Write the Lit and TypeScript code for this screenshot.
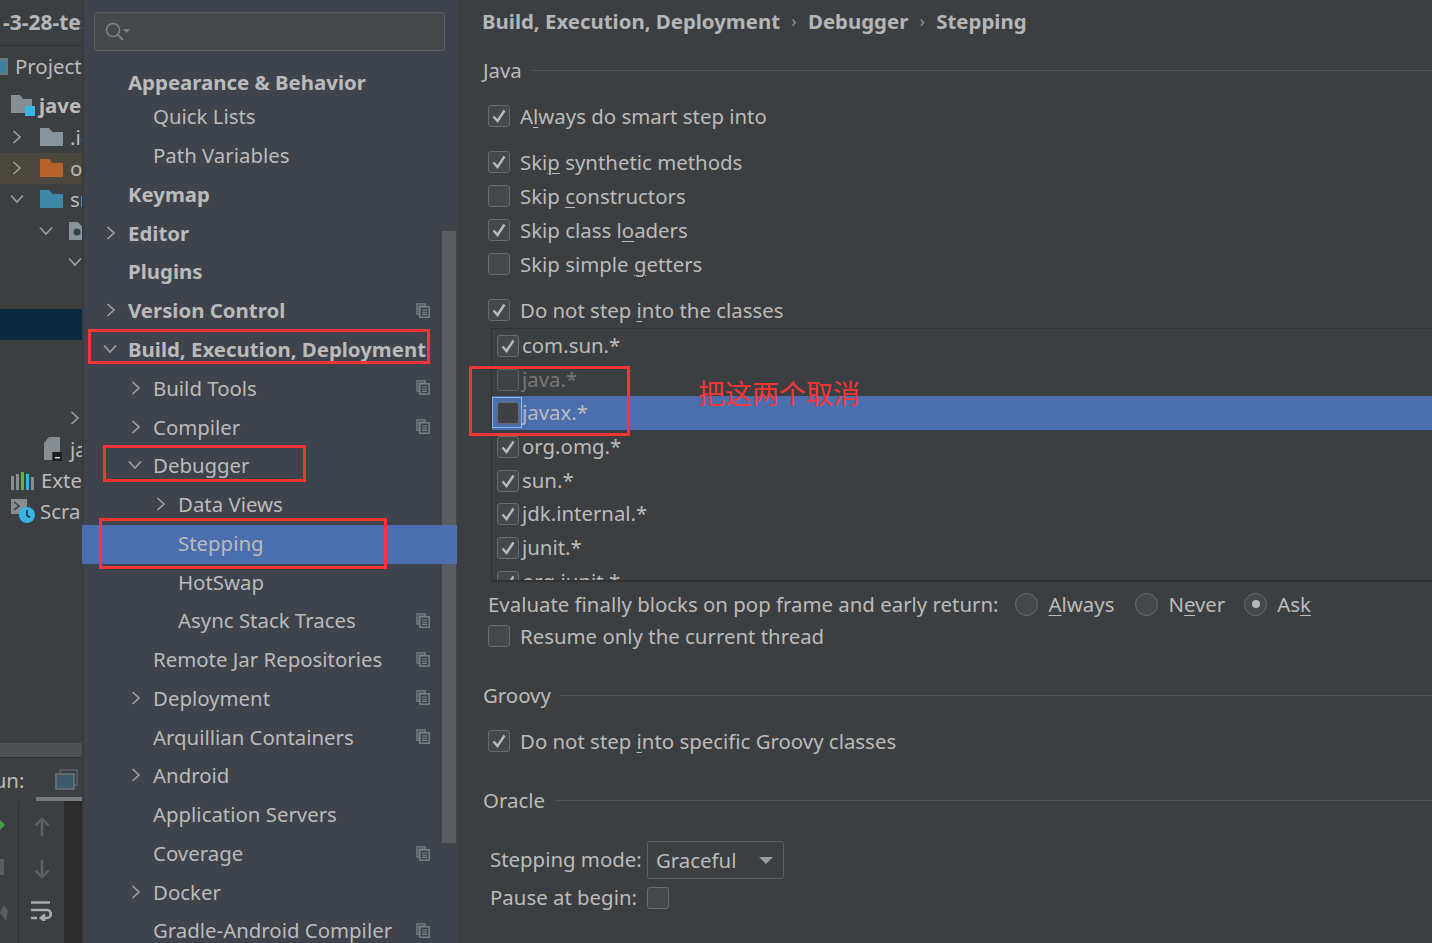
import { LitElement, html, css } from "lit";
import { customElement } from "lit/decorators.js";
import { styleMap } from "lit/directives/style-map.js";

const chevR = html`<svg class="chev" viewBox="0 0 12 16" width="12" height="16"><path d="M2.500 2 L9 8 L2.500 14" fill="none" stroke="#9da0a2" stroke-width="1.700"/></svg>`;
const chevD = html`<svg class="chev" viewBox="0 0 14 12" width="14" height="12"><path d="M1 2.500 L7 9 L13 2.500" fill="none" stroke="#9da0a2" stroke-width="1.700"/></svg>`;
const copyIcon = html`<svg class="copy" viewBox="0 0 14 15" width="14" height="15"><path d="M1 .8h8v2.400H3.200v8H1z" fill="none" stroke="#7c8389" stroke-width="1.300"/><rect x="3.800" y="3.800" width="9.400" height="10.400" fill="none" stroke="#7c8389" stroke-width="1.400"/><path d="M6 7h5M6 9.200h5M6 11.400h5" stroke="#7c8389" stroke-width="1.100"/></svg>`;
const folder = (c: string) => html`<svg viewBox="0 0 23 18" width="23" height="18"><path d="M0 0h9l3.500 4H23v14H0z" fill="${c}"/></svg>`;

type Item = { t: string; lvl: number; bold?: boolean; arrow?: "r" | "d"; copy?: boolean; sel?: boolean };
const items: Item[] = [
  { t: "Appearance & Behavior", lvl: 0, bold: true },
  { t: "Quick Lists", lvl: 1 },
  { t: "Path Variables", lvl: 1 },
  { t: "Keymap", lvl: 0, bold: true },
  { t: "Editor", lvl: 0, bold: true, arrow: "r" },
  { t: "Plugins", lvl: 0, bold: true },
  { t: "Version Control", lvl: 0, bold: true, arrow: "r", copy: true },
  { t: "Build, Execution, Deployment", lvl: 0, bold: true, arrow: "d" },
  { t: "Build Tools", lvl: 1, arrow: "r", copy: true },
  { t: "Compiler", lvl: 1, arrow: "r", copy: true },
  { t: "Debugger", lvl: 1, arrow: "d" },
  { t: "Data Views", lvl: 2, arrow: "r" },
  { t: "Stepping", lvl: 2, sel: true },
  { t: "HotSwap", lvl: 2 },
  { t: "Async Stack Traces", lvl: 2, copy: true },
  { t: "Remote Jar Repositories", lvl: 1, copy: true },
  { t: "Deployment", lvl: 1, arrow: "r", copy: true },
  { t: "Arquillian Containers", lvl: 1, copy: true },
  { t: "Android", lvl: 1, arrow: "r" },
  { t: "Application Servers", lvl: 1 },
  { t: "Coverage", lvl: 1, copy: true },
  { t: "Docker", lvl: 1, arrow: "r" },
  { t: "Gradle-Android Compiler", lvl: 1, copy: true },
];

const listItems: { t: string; on: boolean; dim?: boolean; sel?: boolean }[] = [
  { t: "com.sun.*", on: true },
  { t: "java.*", on: false, dim: true },
  { t: "javax.*", on: false, sel: true },
  { t: "org.omg.*", on: true },
  { t: "sun.*", on: true },
  { t: "jdk.internal.*", on: true },
  { t: "junit.*", on: true },
  { t: "org.junit.*", on: true },
];

const box = (on: boolean) => html`<span class="cb">${on
  ? html`<svg viewBox="0 0 20 20" width="20" height="20"><path d="M4.500 10.500 L8.500 15 L15.500 4.500" fill="none" stroke="#b9bbbd" stroke-width="2.400"/></svg>`
  : ""}</span>`;

@customElement("app-root")
export class AppRoot extends LitElement {
  static styles = css`
    :host { display: flex; width: 1432px; height: 943px; overflow: hidden; position: relative;
      background: #3c3f41; color: #bbbbbb; font-family: "Noto Sans", "Open Sans", sans-serif; font-size: 20.4px; }
    * { box-sizing: border-box; }
    u { text-underline-offset: 3px; text-decoration-thickness: 1px; }

    .left { width: 82px; height: 943px; flex: none; overflow: hidden; display: flex; flex-direction: column; background: #3c3f41; white-space: nowrap; }
    .lhead { height: 46px; flex: none; border-bottom: 1px solid #323232; font-weight: 700; line-height: 44px; padding-left: 3px; font-size: 21px; color: #b4b6b8; overflow: hidden; }
    .lproj { height: 40px; margin-bottom: 4px; flex: none; display: flex; align-items: center; gap: 7px; }
    .lproj i { display: block; width: 8px; height: 17px; border: 2px solid #6e7478; border-left: none; background: #3f7f9f; flex: none; }
    .lrow { height: 31.25px; flex: none; display: flex; align-items: center; position: relative; }
    .lrow svg { flex: none; }
    .ic { display: flex; }
    .ic-j { margin-left: 11px; }
    .ic-f { margin: 0 7px 0 17px; }
    .ic-d { margin: 0 7px 0 16px; }
    .ic-p { margin-left: 16px; }
    .ic-a { margin: 0 8px 0 44px; }
    .ic-e { margin: 0 7px 0 11px; }
    .ic-s { margin: 0 5px 0 11px; }
    .lrow.hl { background: #4b473c; }
    .lrow.dark { background: #0d293e; }
    .jb { font-weight: 700; margin: 0 0 2px 3px; }
    .lgap { height: 62px; flex: none; }
    .lspace { flex: 1; }
    .hscroll { height: 15px; flex: none; background: #4e5052; border-bottom: 1px solid #333; }
    .runrow { height: 39px; flex: none; display: flex; align-items: center; justify-content: space-between; padding: 4px 4px 0 0; margin-left: -19px; }
    .runtab { height: 4px; flex: none; margin-left: 36px; background: #747a80; }
    .tools { height: 142px; flex: none; display: flex; }
    .t1 { width: 19px; flex: none; border-right: 1px solid #323232; overflow: hidden; display: flex; flex-direction: column; align-items: flex-start; gap: 28px; padding-top: 18px; }
    .t1 svg:first-child { margin-left: -1px; }
    .stub { display: block; width: 4px; height: 16px; background: #5b5d5f; }
    .t2 { width: 45px; flex: none; display: flex; flex-direction: column; align-items: center; gap: 22px; padding-top: 16px; }
    .t3 { flex: 1; background: #2b2b2b; }

    .side { width: 375px; flex: none; height: 943px; background: #3e434c; position: relative; box-shadow: inset 2px 0 2px -1px #33363a; overflow: hidden; }
    .search { margin: 12px 12px 0 12px; height: 39px; background: #45484a; border: 1.5px solid #5c5f60; border-radius: 3px; display: flex; align-items: center; padding-left: 10px; }
    .tree { margin-top: 16px; position: relative; z-index: 1; }
    .item { height: 38.78px; display: flex; align-items: center; position: relative; white-space: nowrap; padding-bottom: 4px; }
    .item:first-child { height: 32px; padding-bottom: 3px; }
    .item.bold { font-weight: 700; }
    .item.sel { background: #4b6eaf; }
    .item .arrow { position: absolute; top: 0; bottom: 4px; display: flex; align-items: center; }
    .item .copy { position: absolute; left: 334px; top: 10px; }
    .sb { position: absolute; left: 360px; top: 231px; width: 14px; height: 612px; background: #595c61; }

    .main { flex: 1; min-width: 0; height: 943px; display: flex; flex-direction: column; padding-left: 25px; white-space: nowrap; overflow: hidden; }
    .crumb { height: 43px; flex: none; display: flex; align-items: center; font-weight: 700; gap: 11.5px; color: #b4b6b8; padding-bottom: 2px; }
    .crumb .sep { font-weight: 400; font-size: 16px; color: #9a9c9e; }
    .group { display: flex; align-items: center; gap: 10px; height: 30px; margin-left: 1px; flex: none; }
    .group hr { flex: 1; border: none; border-top: 1px solid #515355; margin: 0; }
    .g1 { margin-top: 12px; }
    .g2 { margin-top: 34px; }
    .g3 { margin-top: 27px; }
    .check { display: flex; align-items: center; gap: 10px; height: 34px; padding-left: 6px; flex: none; }
    .c1 { margin-top: 14px; }
    .c2 { height: 20px; }
    .mt { margin-top: 12px; }
    .cb { width: 22px; height: 22px; flex: none; border: 1.5px solid #6b6b6b; border-radius: 3px; background: #43494a; display: flex; align-items: center; justify-content: center; position: relative; }
    .list { margin: 1px 0 0 9px; height: 254px; border-top: 1px solid #323232; border-left: 1px solid #323232; border-bottom: 2px solid #323232; overflow: hidden; flex: none; }
    .li { height: 33.7px; display: flex; align-items: center; gap: 3px; padding-left: 5px; padding-bottom: 2px; flex: none; position: relative; }
    .li .cb { top: 1px; }
    .li.sel { background: #4b6eaf; }
    .li.sel .cb { background: #3e4244; }
    .li.sel .cb::after { content: ""; position: absolute; left: -6px; right: -4px; top: -6px; bottom: -5px; border: 1.5px solid #8ab6ea; }
    .li.dim { color: #777; }
    .li.dim .cb { background: #3f4345; border-color: #5f6263; }
    .eval { display: flex; align-items: center; height: 44px; margin-left: 6px; flex: none; }
    .radio { width: 23px; height: 23px; border-radius: 50%; border: 1.5px solid #6b6b6b; background: #43494a; display: flex; align-items: center; justify-content: center; flex: none; }
    .radio b { width: 8px; height: 8px; border-radius: 50%; background: #b4b6b8; }
    .rgroup { display: flex; align-items: center; gap: 10px; }
    .r1 { margin-left: 17px; } .r2 { margin-left: 21px; } .r3 { margin-left: 19px; }
    .oracle { display: grid; grid-template-columns: 157px auto; margin: 26px 0 0 8px; align-items: center; justify-content: start; }
    .lbl { height: 38px; line-height: 36px; }
    .combo { width: 137px; height: 38px; border: 1.5px solid #5e6060; border-radius: 3px; display: flex; align-items: center; padding-left: 8px; justify-content: space-between; padding-right: 10px; }
    .tri { width: 0; height: 0; border-left: 7px solid transparent; border-right: 7px solid transparent; border-top: 7px solid #9a9c9e; }

    .mark { position: absolute; border: 3px solid #f63636; pointer-events: none; z-index: 2; }
    .m1 { left: 88px; top: 329px; width: 342px; height: 35px; }
    .m2 { left: 469px; top: 366px; width: 161px; height: 70px; }
    .m3 { left: 103px; top: 445px; width: 203px; height: 37px; }
    .m4 { left: 99px; top: 518px; width: 288px; height: 51px; }
    .note { position: absolute; left: 698px; top: 373px; color: #f63636; font-size: 27px; line-height: 40px; font-family: "Noto Sans CJK SC", sans-serif; z-index: 2; }
  `;

  private lrow(indent: number, chev: unknown, icon: unknown, text: unknown, cls = "") {
    return html`<div class="lrow ${cls}">
      <span class="ic" style=${styleMap({ marginLeft: indent + "px" })}>${chev}</span>${icon}${text}</div>`;
  }

  private left() {
    return html`<div class="left">
      <div class="lhead">-3-28-test</div>
      <div class="lproj"><i></i><span>Project</span></div>
      <div class="lrow"><span class="ic ic-j">
        <svg viewBox="0 0 25 22" width="25" height="22"><path d="M0 0h9l3 4h9v14H0z" fill="#868e94"/><rect x="14" y="11" width="10" height="10" fill="#3ab4e6"/></svg></span>
        <span class="jb">javeee</span></div>
      ${this.lrow(11, chevR, html`<span class="ic ic-f">${folder("#87939a")}</span>`, ".idea")}
      ${this.lrow(11, chevR, html`<span class="ic ic-f">${folder("#b5612c")}</span>`, "out", "hl")}
      ${this.lrow(10, chevD, html`<span class="ic ic-d">${folder("#3d86a5")}</span>`, "src")}
      ${this.lrow(39, chevD, html`<span class="ic ic-p"><svg viewBox="0 0 23 18" width="23" height="18"><path d="M0 0h9l3.500 4H23v14H0z" fill="#87939a"/><circle cx="8" cy="10" r="3.500" fill="#3c3f41"/></svg></span>`, "")}
      ${this.lrow(68, chevD, "", "")}
      <div class="lrow"></div>
      <div class="lrow dark"></div>
      <div class="lgap"></div>
      ${this.lrow(69, chevR, "", "")}
      <div class="lrow"><span class="ic ic-a">
        <svg viewBox="0 0 18 24" width="18" height="24"><path d="M5 0h11v15H8v8H0V6z" fill="#868e94"/><rect x="9" y="15" width="9" height="9" fill="#1f1f1f"/><rect x="11" y="20" width="5" height="1.400" fill="#ddd"/></svg></span>ja</div>
      <div class="lrow"><span class="ic ic-e">
        <svg viewBox="0 0 23 19" width="23" height="19"><rect y="5" width="3" height="14" fill="#868e94"/><rect x="5" y="3" width="3" height="16" fill="#868e94"/><rect x="10" y="1" width="3" height="18" fill="#62b543"/><rect x="15" y="3" width="3" height="16" fill="#3ab4e6"/><rect x="20" y="6" width="3" height="13" fill="#868e94"/></svg></span>Exte</div>
      <div class="lrow"><span class="ic ic-s">
        <svg viewBox="0 0 24 24" width="24" height="24"><rect y="0" width="16" height="15" fill="#868e94"/><path d="M3 3l5 4-5 4" fill="none" stroke="#3c3f41" stroke-width="1.600"/><circle cx="16" cy="16" r="8" fill="#3ab4e6"/><path d="M16 11v5.500l3 2" fill="none" stroke="#23323a" stroke-width="1.600"/></svg></span>Scra</div>
      <div class="lspace"></div>
      <div class="hscroll"></div>
      <div class="runrow"><span>Run:</span>
        <svg viewBox="0 0 23 22" width="23" height="22"><path d="M5 4V1h17v15h-3" fill="none" stroke="#5a6267" stroke-width="1.400"/><rect x="1" y="5" width="18" height="15" fill="#3d5a6a" stroke="#68717a" stroke-width="1.600"/></svg></div>
      <div class="runtab"></div>
      <div class="tools">
        <div class="t1">
          <svg viewBox="0 0 6 12" width="6" height="12"><path d="M0 0l6 6-6 6z" fill="#499c54"/></svg>
          <span class="stub"></span>
          <svg viewBox="0 0 12 20" width="12" height="20"><path d="M0 10l4-8 4 6-2 10z" fill="#5b5d5f"/></svg>
        </div>
        <div class="t2">
          <svg viewBox="0 0 16 20" width="16" height="20"><path d="M8 19V2M1.500 8.500L8 2l6.500 6.500" fill="none" stroke="#5f6264" stroke-width="2.400"/></svg>
          <svg viewBox="0 0 16 20" width="16" height="20"><path d="M8 1v17M1.500 11.500L8 18l6.500-6.500" fill="none" stroke="#5f6264" stroke-width="2.400"/></svg>
          <svg viewBox="0 0 21 20" width="21" height="20"><path d="M0 1.500h19M0 9h16c5 0 5 8 0 8h-5M14 13.500l-4 3.500 4 3M0 17h6" fill="none" stroke="#a8abad" stroke-width="2.700"/></svg>
        </div>
        <div class="t3"></div>
      </div>
    </div>`;
  }

  private side() {
    return html`<div class="side">
      <div class="search">
        <svg viewBox="0 0 26 20" width="26" height="20"><circle cx="8" cy="8" r="6.500" fill="none" stroke="#7e8285" stroke-width="1.500"/><path d="M12.500 12.500L18 18" stroke="#7e8285" stroke-width="1.800"/><path d="M18 7h7l-3.500 4z" fill="#7e8285"/></svg>
      </div>
      <div class="sb"></div>
      <div class="tree">
        ${items.map((it) => {
          const x = 46 + it.lvl * 25;
          return html`<div class="item ${it.bold ? "bold" : ""} ${it.sel ? "sel" : ""}" style=${styleMap({ paddingLeft: x + "px" })}>
            ${it.arrow ? html`<span class="arrow" style=${styleMap({ left: x - (it.arrow === "r" ? 23 : 25) + "px" })}>${it.arrow === "r" ? chevR : chevD}</span>` : ""}
            ${it.t}${it.copy ? copyIcon : ""}</div>`;
        })}
      </div>
    </div>`;
  }

  private main() {
    return html`<div class="main">
      <div class="crumb"><span>Build, Execution, Deployment</span><span class="sep">›</span><span>Debugger</span><span class="sep">›</span><span>Stepping</span></div>
      <div class="group g1"><span>Java</span><hr /></div>
      <div class="check c1">${box(true)}<span>A<u>l</u>ways do smart step into</span></div>
      <div class="check mt">${box(true)}<span>Ski<u>p</u> synthetic methods</span></div>
      <div class="check">${box(false)}<span>Skip <u>c</u>onstructors</span></div>
      <div class="check">${box(true)}<span>Skip class l<u>o</u>aders</span></div>
      <div class="check">${box(false)}<span>Skip simple <u>g</u>etters</span></div>
      <div class="check mt">${box(true)}<span>Do not step <u>i</u>nto the classes</span></div>
      <div class="list">
        ${listItems.map((l) => html`<div class="li ${l.sel ? "sel" : ""} ${l.dim ? "dim" : ""}">${box(l.on)}<span>${l.t}</span></div>`)}
      </div>
      <div class="eval">
        <span>Evaluate finally blocks on pop frame and early return:</span>
        <span class="rgroup r1"><span class="radio"></span><span><u>A</u>lways</span></span>
        <span class="rgroup r2"><span class="radio"></span><span>N<u>e</u>ver</span></span>
        <span class="rgroup r3"><span class="radio"><b></b></span><span>As<u>k</u></span></span>
      </div>
      <div class="check c2">${box(false)}<span>Resume only the current thread</span></div>
      <div class="group g2"><span>Groovy</span><hr /></div>
      <div class="check c1">${box(true)}<span>Do not step <u>i</u>nto specific Groovy classes</span></div>
      <div class="group g3"><span>Oracle</span><hr /></div>
      <div class="oracle">
        <span class="lbl">Stepping mode:</span>
        <div class="combo"><span>Graceful</span><i class="tri"></i></div>
        <span class="lbl">Pause at begin:</span>
        ${box(false)}
      </div>
    </div>`;
  }

  render() {
    return html`${this.left()}${this.side()}${this.main()}
      <div class="mark m1"></div><div class="mark m2"></div><div class="mark m3"></div><div class="mark m4"></div>
      <div class="note">把这两个取消</div>`;
  }
}
